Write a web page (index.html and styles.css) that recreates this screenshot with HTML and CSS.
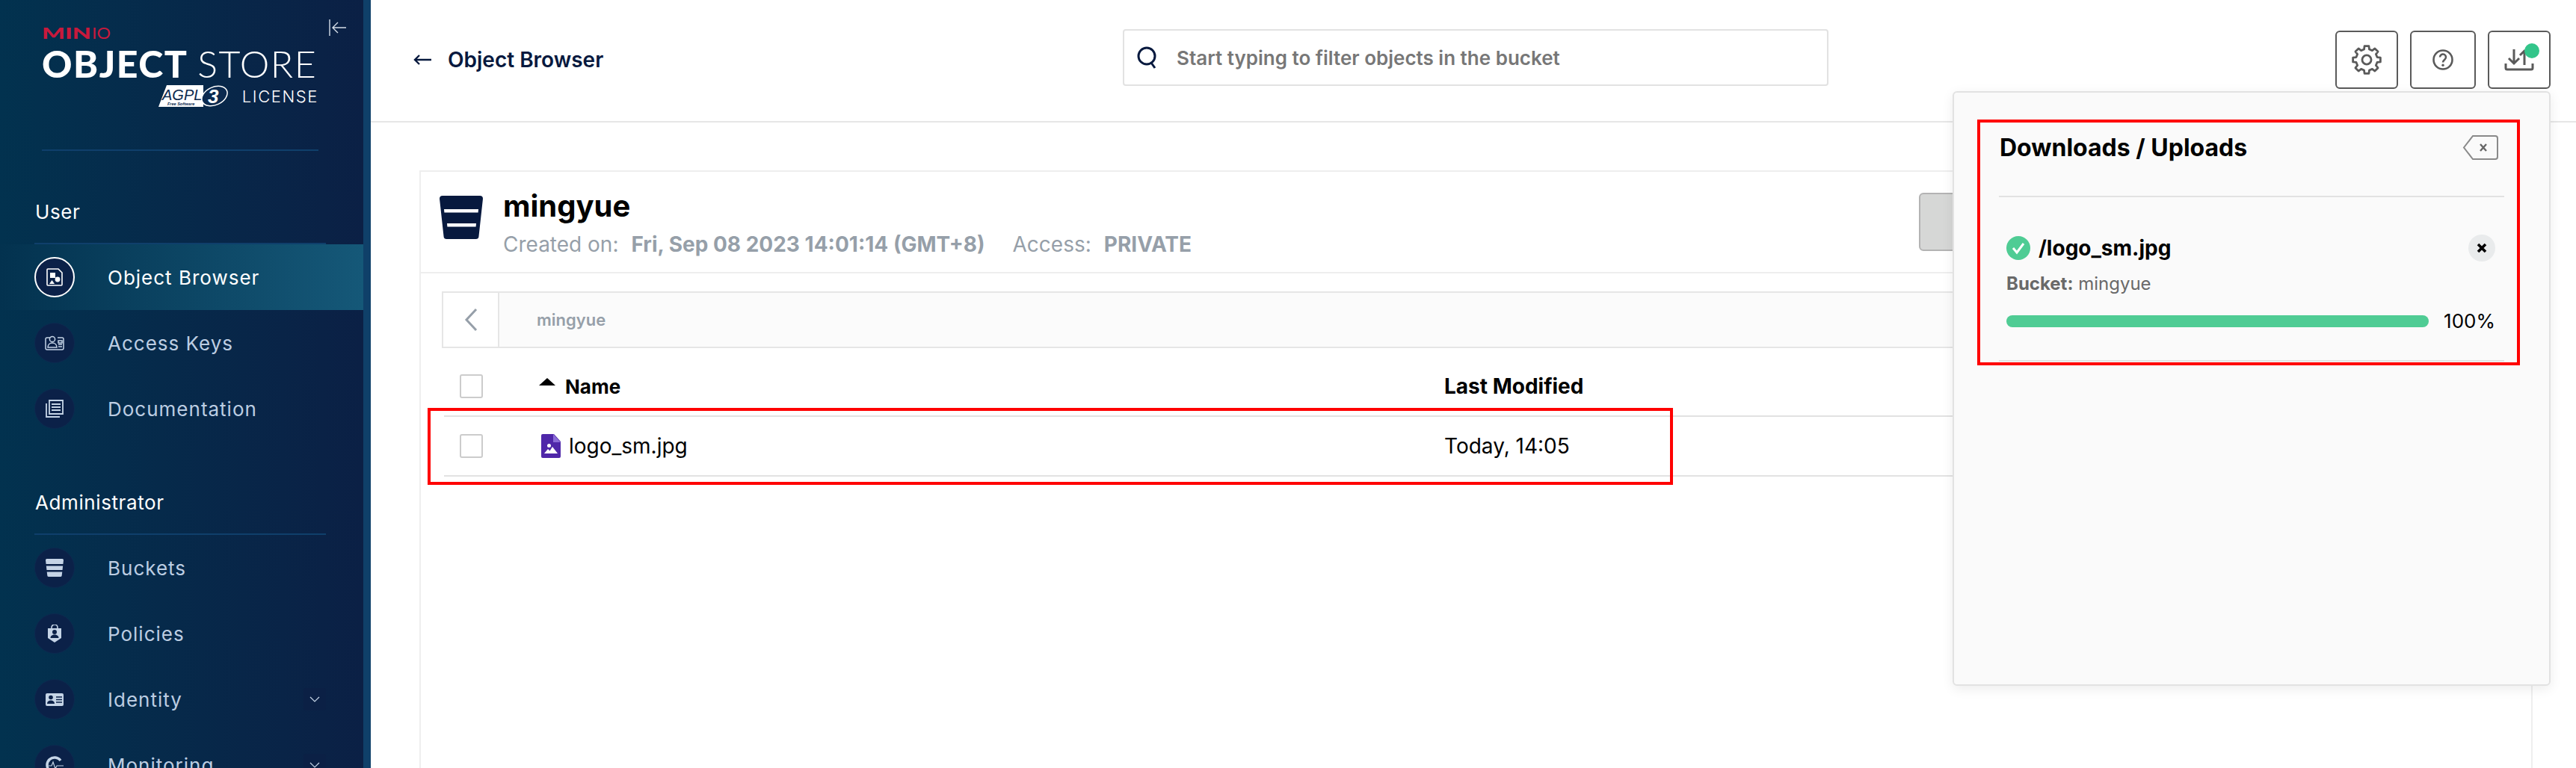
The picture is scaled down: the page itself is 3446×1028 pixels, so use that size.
FILE: index.html
```html
<!DOCTYPE html>
<html lang="en">
<head>
  <meta charset="UTF-8" />
  <title>MinIO Object Store - Object Browser</title>
  <link rel="stylesheet" href="styles.css">
</head>
<body>

<aside class="sidebar">
  <div class="brand">
    <div class="brand-minio"><b>MIN</b><span>IO</span></div>
    <div class="brand-name"><b>OBJECT</b> <span>STORE</span></div>
    <div class="brand-license">
      <svg class="agpl" width="94" height="31" viewBox="0 0 94 31">
        <polygon points="0,30 11,1 60,1 60,30" fill="#fff"/>
        <text x="5" y="21" class="agpl-word">AGPL</text>
        <text x="12" y="28" class="agpl-free">Free Software</text>
        <ellipse cx="75" cy="15.500" rx="18" ry="12" transform="rotate(-25 75 15.500)" fill="#0b2a4f" stroke="#fff" stroke-width="1.500"/>
        <text x="66" y="25" class="agpl-three">3</text>
      </svg>
      <span>LICENSE</span>
    </div>
    <svg class="collapse" width="24" height="24" viewBox="0 0 24 24" fill="none" stroke="#d5dde8" stroke-width="1.4">
      <path d="M1 1v22M23 12H5M12 5l-7 7 7 7"/>
    </svg>
  </div>

  <div class="nav-title">User</div>
  <a class="nav-item active">
    <span class="nav-icon">
      <svg width="24" height="26" viewBox="0 0 24 26" fill="none" stroke="#fff" stroke-width="1.6">
        <path d="M3 2h14l5 5v16a1 1 0 0 1-1 1H3a1 1 0 0 1-1-1V3a1 1 0 0 1 1-1z"/>
        <g fill="#fff" stroke="none"><rect x="6" y="7" width="7" height="7"/><circle cx="16" cy="16" r="3.4"/><path d="M5 22l3.5-5 3.5 5z"/></g>
      </svg>
    </span>
    <span>Object Browser</span>
  </a>
  <a class="nav-item">
    <span class="nav-icon">
      <svg width="26" height="20" viewBox="0 0 26 20" fill="none" stroke="#c5d4e6" stroke-width="1.5">
        <path d="M7 3H3a2 2 0 0 0-2 2v12a2 2 0 0 0 2 2h20a2 2 0 0 0 2-2V5a2 2 0 0 0-2-2h-6"/>
        <circle cx="10" cy="5" r="3.6"/>
        <path d="M4 16c0-4 3-6 6-6s6 2 6 6z"/>
        <path d="M18 7h5v3h-5zM18 12h5M18 15h5"/>
      </svg>
    </span>
    <span>Access Keys</span>
  </a>
  <a class="nav-item">
    <span class="nav-icon">
      <svg width="24" height="24" viewBox="0 0 24 24" fill="none" stroke="#c5d4e6" stroke-width="1.8">
        <path d="M5 1h18v18H5z" fill="none"/>
        <path d="M1 5v18h18" />
        <path d="M8 6h12M8 10h12M8 14h12"/>
      </svg>
    </span>
    <span>Documentation</span>
  </a>

  <div class="nav-title">Administrator</div>
  <a class="nav-item">
    <span class="nav-icon">
      <svg width="24" height="24" viewBox="0 0 58 58">
        <path d="M0 4a4 4 0 0 1 4-4h50a4 4 0 0 1 4 4l-5.500 50a4 4 0 0 1-4 4H9.500a4 4 0 0 1-4-4z" fill="#c5d4e6"/>
        <path d="M0 17h58v6H0zM0 36h58v6H0z" fill="#0b2148"/>
      </svg>
    </span>
    <span>Buckets</span>
  </a>
  <a class="nav-item">
    <span class="nav-icon">
      <svg width="20" height="24" viewBox="0 0 20 24">
        <path d="M6 5V4a4 4 0 0 1 8 0v1" fill="none" stroke="#c5d4e6" stroke-width="1.6"/>
        <path d="M1 5h18v13l-9 6-9-6z" fill="#c5d4e6"/>
        <circle cx="10" cy="10" r="3" fill="#0b2148"/>
        <path d="M4.500 18c0-3 2.500-4.500 5.500-4.500s5.500 1.500 5.500 4.500z" fill="#0b2148"/>
      </svg>
    </span>
    <span>Policies</span>
  </a>
  <a class="nav-item">
    <span class="nav-icon">
      <svg width="24" height="17" viewBox="0 0 24 17">
        <rect width="24" height="17" rx="2" fill="#c5d4e6"/>
        <circle cx="7" cy="5.500" r="2.800" fill="#0b2148"/>
        <path d="M2 14c0-3 2.200-4.500 5-4.500s5 1.500 5 4.500z" fill="#0b2148"/>
        <path d="M14 5h8M14 8.500h8M14 12h8" stroke="#0b2148" stroke-width="1.500"/>
      </svg>
    </span>
    <span>Identity</span>
    <span class="nav-toggle"><svg width="14" height="8" viewBox="0 0 14 8" fill="none" stroke="#c5d4e6" stroke-width="1.2"><path d="M1 1l6 6 6-6"/></svg></span>
  </a>
  <a class="nav-item">
    <span class="nav-icon">
      <svg width="24" height="24" viewBox="0 0 24 24" fill="none" stroke="#c5d4e6">
        <path d="M20 6a10 10 0 1 0 0 12" stroke-width="3.500"/>
        <path d="M4 13h4l2-5 3 9 2-4h9" stroke-width="1.200"/>
      </svg>
    </span>
    <span>Monitoring</span>
    <span class="nav-toggle"><svg width="14" height="8" viewBox="0 0 14 8" fill="none" stroke="#c5d4e6" stroke-width="1.2"><path d="M1 1l6 6 6-6"/></svg></span>
  </a>
</aside>

<main class="main">
  <header class="topbar">
    <a class="back-link">
      <svg width="24" height="16" viewBox="0 0 24 16" fill="none" stroke="#07193e" stroke-width="2.400"><path d="M24 8H2M8 2L2 8l6 6"/></svg>
      <span>Object Browser</span>
    </a>
    <div class="search">
      <svg width="28" height="30" viewBox="0 0 28 30" fill="none" stroke="#07193e" stroke-width="3"><circle cx="13" cy="13" r="11"/><path d="M19 22l5 7"/></svg>
      <span>Start typing to filter objects in the bucket</span>
    </div>
    <div class="top-actions">
      <button class="top-btn gear">
        <svg width="40" height="40" viewBox="-21.500 -21.500 43 43" fill="none" stroke="#5a5a5a" stroke-width="3" stroke-linejoin="round">
          <polygon points="-3.750,-15.040 -3.130,-19.750 3.130,-19.750 3.750,-15.040 7.980,-13.290 11.750,-16.180 16.180,-11.750 13.290,-7.980 15.040,-3.750 19.750,-3.130 19.750,3.130 15.040,3.750 13.290,7.980 16.180,11.750 11.750,16.180 7.980,13.290 3.750,15.040 3.130,19.750 -3.130,19.750 -3.750,15.040 -7.980,13.290 -11.750,16.180 -16.180,11.750 -13.290,7.980 -15.040,3.750 -19.750,3.130 -19.750,-3.130 -15.040,-3.750 -13.290,-7.980 -16.180,-11.750 -11.750,-16.180 -7.980,-13.290"/>
          <circle r="6.500"/>
        </svg>
      </button>
      <button class="top-btn help">
        <svg width="28" height="28" viewBox="-14 -14 28 28" fill="none" stroke="#5a5a5a" stroke-width="2.600">
          <circle r="12.500"/>
          <path d="M-4-3.500a4 4 0 1 1 6.500 3.100C1 .8 0 1.500 0 3.500"/>
          <circle cy="7.200" r="1.700" fill="#5a5a5a" stroke="none"/>
        </svg>
      </button>
      <button class="top-btn transfers">
        <svg width="40" height="30" viewBox="0 0 40 30" fill="none" stroke="#5a5a5a" stroke-width="3">
          <path d="M2 20v6a2 2 0 0 0 2 2h32a2 2 0 0 0 2-2v-6"/>
          <path d="M13 1v19M6 13l7 7 7-7"/>
          <path d="M27 22V3M21 9l6-6 6 6"/>
        </svg>
        <span class="badge"></span>
      </button>
    </div>
  </header>

  <div class="content">
    <section class="bucket-card">
      <div class="bucket-head">
        <svg class="bucket-icon" width="58" height="58" viewBox="0 0 58 58">
          <path d="M0 4a4 4 0 0 1 4-4h50a4 4 0 0 1 4 4l-5.500 50a4 4 0 0 1-4 4H9.500a4 4 0 0 1-4-4z" fill="#07193e"/>
          <path d="M6 18h46l-.4 4.500H6.400zM10 37h39l-.4 4.500H10.400z" fill="#fff"/>
        </svg>
        <div class="bucket-info">
          <h1>mingyue</h1>
          <div class="bucket-meta">
            <span>Created on:<b>Fri, Sep 08 2023 14:01:14 (GMT+8)</b></span>
            <span>Access:<b>PRIVATE</b></span>
          </div>
        </div>
        <div class="bucket-actions"><button class="btn-disabled"></button></div>
      </div>

      <div class="browser">
        <div class="breadcrumb">
          <button class="crumb-back">
            <svg width="18" height="32" viewBox="0 0 18 32" fill="none" stroke="#969fa9" stroke-width="3"><path d="M16 2L3 16l13 14"/></svg>
          </button>
          <span class="crumb-path">mingyue</span>
        </div>

        <div class="table-row table-head">
          <span class="checkbox"></span>
          <span class="name-cell">
            <svg width="22" height="10" viewBox="0 0 22 10"><path d="M11 0l11 10H0z" fill="#000"/></svg>
            Name
          </span>
          <span>Last Modified</span>
        </div>
        <div class="table-row">
          <span class="checkbox"></span>
          <span class="name-cell file">
            <svg width="26" height="32" viewBox="0 0 26 32">
              <path d="M2 0h15l9 10v20a2 2 0 0 1-2 2H2a2 2 0 0 1-2-2V2a2 2 0 0 1 2-2z" fill="#4f27a9"/>
              <path d="M16 0l10 11H16z" fill="#8a6cd6"/>
              <circle cx="10.500" cy="15.500" r="2.500" fill="#fff"/>
              <path d="M4 26l5-6 2.500 2.500L15 17l7 9z" fill="#fff"/>
            </svg>
            logo_sm.jpg
          </span>
          <span>Today, 14:05</span>
        </div>
      </div>
    </section>
  </div>
</main>

<div class="transfer-panel">
  <div class="panel-head">
    <h2>Downloads / Uploads</h2>
    <svg width="48" height="33" viewBox="0 0 48 33" fill="none" stroke="#8a8a8a" stroke-width="2">
      <path d="M14 1h30a3 3 0 0 1 3 3v25a3 3 0 0 1-3 3H14L2 16.500z"/>
      <path d="M24 12l8 9M32 12l-8 9" stroke="#666" stroke-width="2.400"/>
    </svg>
  </div>
  <div class="transfer-item">
    <div class="transfer-title">
      <svg width="32" height="32" viewBox="0 0 32 32"><circle cx="16" cy="16" r="16" fill="#4fcc94"/><path d="M9 16l5 6 9-12" fill="none" stroke="#fff" stroke-width="3"/></svg>
      <b>/logo_sm.jpg</b>
      <span class="transfer-close">
        <svg width="14" height="14" viewBox="0 0 14 14" fill="none" stroke="#000" stroke-width="3.600"><path d="M2 2l10 10M12 2L2 12"/></svg>
      </span>
    </div>
    <div class="transfer-bucket"><b>Bucket:</b> mingyue</div>
    <div class="transfer-progress">
      <div class="bar"><div class="bar-fill" style="width: 100%"></div></div>
      <span>100%</span>
    </div>
  </div>
</div>

<div class="mark mark-row"></div>
<div class="mark mark-panel"></div>

</body>
</html>
```

FILE: styles.css
```css
* {
  box-sizing: border-box;
}

html, body {
  height: 100%;
}

body {
  margin: 0;
  display: flex;
  height: 1028px;
  overflow: hidden;
  position: relative;
  font-family: Inter, "Liberation Sans", sans-serif;
  font-size: 26px;
  color: #000;
  background: #fff;
}

button {
  font: inherit;
  padding: 0;
}

/* sidebar */
.sidebar {
  width: 496px;
  flex: none;
  height: 1028px;
  overflow: hidden;
  background: linear-gradient(90deg, #02324f 0%, #0b2045 100%);
  background-size: 486px 100%;
  background-repeat: no-repeat;
  background-color: #0f4069;
}

.brand {
  position: relative;
  height: 202px;
  width: 370px;
  margin-left: 56px;
  padding-top: 33px;
  border-bottom: 2px solid #0f3f6b;
}
.brand-minio {
  display: flex;
  align-items: center;
  height: 22px;
  line-height: 22px;
  font-family: Lato, sans-serif;
  font-size: 21px;
  color: #c8193c;
}
.brand-minio b {
  display: inline-block;
  width: 67px;
  font-weight: 900;
  transform: scaleX(1.55);
  transform-origin: left;
}
.brand-minio span {
  display: inline-block;
  font-weight: 400;
  transform: scaleX(1.1);
  transform-origin: left;
}
.brand-name {
  margin-top: 3px;
  height: 54px;
  line-height: 54px;
  font-family: Lato, sans-serif;
  font-size: 50px;
  color: #fff;
  white-space: nowrap;
}
.brand-name b {
  font-weight: 900;
  letter-spacing: 1.5px;
}
.brand-name span {
  font-weight: 300;
  letter-spacing: 1.5px;
}
.brand-license {
  display: flex;
  justify-content: flex-end;
  align-items: center;
  gap: 18px;
  margin-top: 1px;
  font-weight: 300;
  font-size: 22px;
  letter-spacing: 1.6px;
  color: #fff;
}
.agpl-word {
  font-family: "Liberation Sans", sans-serif;
  font-style: italic;
  font-size: 20px;
  fill: #0b2a4f;
  letter-spacing: 0;
}
.agpl-free {
  font-family: "Liberation Sans", sans-serif;
  font-style: italic;
  font-weight: 700;
  font-size: 5.500px;
  fill: #0b2a4f;
  letter-spacing: 0;
}
.agpl-three {
  font-family: "Liberation Sans", sans-serif;
  font-style: italic;
  font-weight: 700;
  font-size: 26px;
  fill: #fff;
  letter-spacing: 0;
}
.collapse {
  position: absolute;
  left: 384px;
  top: 25px;
}

.nav-title {
  display: flex;
  align-items: flex-end;
  height: 125px;
  width: 390px;
  margin-left: 46px;
  padding: 0 0 24px 1px;
  border-bottom: 2px solid #0f3f6b;
  font-size: 26px;
  line-height: 34px;
  letter-spacing: .6px;
  color: #fff;
}

.nav-item {
  display: flex;
  align-items: center;
  width: 486px;
  height: 88px;
  padding: 0 50px 0 46px;
  gap: 44px;
  font-size: 26px;
  letter-spacing: 1px;
  color: #bccde2;
}
.nav-item.active {
  color: #fff;
  background: linear-gradient(90deg, #03324f 0%, #155878 100%);
}
.nav-icon {
  display: flex;
  align-items: center;
  justify-content: center;
  flex: none;
  width: 54px;
  height: 54px;
  border-radius: 50%;
  background: #0b2148;
  border: 1px solid #0c2a50;
}
.active .nav-icon {
  border: 2px solid #fff;
}
.nav-toggle {
  display: flex;
  align-items: center;
  justify-content: center;
  width: 30px;
  height: 30px;
  margin-left: auto;
  border-radius: 3px;
  background: #0b2045;
}

/* top bar */
.main {
  flex: 1;
  display: flex;
  flex-direction: column;
  min-width: 0;
}
.topbar {
  display: grid;
  grid-template-columns: 1006px 944px 1fr;
  align-items: center;
  height: 164px;
  flex: none;
  border-bottom: 2px solid #e6e6e6;
  padding-bottom: 2px;
}
.back-link {
  display: flex;
  align-items: center;
  gap: 22px;
  padding-left: 57px;
  font-weight: 600;
  font-size: 28px;
  color: #07193e;
}
.search {
  display: flex;
  align-items: center;
  gap: 25px;
  height: 76px;
  margin-top: -6px;
  padding-left: 17px;
  border: 2px solid #e2e2e2;
  border-radius: 4px;
  font-weight: 600;
  font-size: 26px;
  color: #777;
}
.top-actions {
  display: flex;
  justify-content: flex-end;
  gap: 16px;
  padding-right: 34px;
}
.top-btn {
  position: relative;
  display: flex;
  align-items: center;
  justify-content: center;
  height: 78px;
  background: #fff;
  border: 2px solid #5a5a5a;
  border-radius: 6px;
}
.gear { width: 84px; }
.help { width: 88px; }
.transfers { width: 84px; }
.badge {
  position: absolute;
  right: 13px;
  top: 15px;
  width: 20px;
  height: 20px;
  border-radius: 50%;
  background: #33c58a;
}

/* bucket card */
.content {
  flex: 1;
  padding: 64px 58px 0 65px;
  min-height: 0;
  overflow: hidden;
}
.bucket-card {
  height: 900px;
  border: 2px solid #eee;
}
.bucket-head {
  display: flex;
  height: 136px;
  padding-left: 25px;
  border-bottom: 2px solid #eee;
}
.bucket-icon {
  flex: none;
  margin-top: 32px;
}
.bucket-info {
  padding: 22px 0 0 27px;
}
.bucket-info h1 {
  margin: 0;
  font-size: 40px;
  line-height: 48px;
  font-weight: 700;
}
.bucket-meta {
  display: flex;
  gap: 37px;
  margin-top: 10px;
  line-height: 34px;
  font-size: 28px;
  color: #969fa9;
}
.bucket-meta b {
  margin-left: 17px;
  font-weight: 700;
}
.bucket-actions {
  margin-left: auto;
  width: 819px;
  flex: none;
  padding-top: 28px;
}
.btn-disabled {
  display: block;
  width: 200px;
  height: 78px;
  background: #d6d7d6;
  border: 2px solid #b3b3b3;
  border-radius: 6px;
}

.browser {
  padding: 24px 28px 0;
}
.breadcrumb {
  display: flex;
  height: 76px;
  background: #fbfbfb;
  border: 2px solid #e6e6e6;
  border-right: 0;
}
.crumb-back {
  display: flex;
  align-items: center;
  justify-content: center;
  width: 75px;
  flex: none;
  background: #fff;
  border: 0;
  border-right: 2px solid #e6e6e6;
}
.crumb-path {
  align-self: center;
  margin-left: 50px;
  font-size: 22px;
  font-weight: 600;
  color: #969fa9;
}

.table-row {
  display: grid;
  grid-template-columns: 127px 1190px 1fr;
  align-items: center;
  height: 80px;
  margin-left: 3px;
  padding-left: 21px;
  border-bottom: 2px solid #e2e2e2;
  font-size: 28px;
}
.table-head {
  height: 92px;
  padding-top: 12px;
  font-weight: 700;
}
.checkbox {
  display: block;
  width: 31px;
  height: 32px;
  background: #fff;
  border: 2px solid #ccc;
  border-radius: 3px;
}
.name-cell {
  display: flex;
  align-items: center;
  gap: 13px;
  margin-left: -21px;
  font-size: 26px;
}
.table-head .name-cell svg {
  margin-top: -12px;
}
.file {
  margin-left: -18px;
  gap: 11px;
  font-size: 28px;
}

/* downloads panel, lies over the card */
.transfer-panel {
  position: absolute;
  left: 2612px;
  top: 122px;
  width: 800px;
  height: 796px;
  padding: 0 60px;
  background: #fafafa;
  border: 2px solid #e2e2e2;
  border-radius: 6px;
  box-shadow: 0 4px 16px rgba(0, 0, 0, .08);
}
.panel-head {
  display: flex;
  justify-content: space-between;
  align-items: center;
  height: 140px;
  padding: 8px 8px 0 1px;
  border-bottom: 2px solid #e2e2e2;
}
.panel-head h2 {
  margin: 0;
  font-size: 32px;
  font-weight: 700;
}
.transfer-item {
  height: 220px;
  padding: 50px 12px 0 10px;
  border-bottom: 2px solid #e2e2e2;
}
.transfer-title {
  display: flex;
  align-items: center;
  gap: 11px;
  height: 36px;
  font-size: 28px;
}
.transfer-title b {
  font-weight: 700;
}
.transfer-close {
  display: flex;
  align-items: center;
  justify-content: center;
  width: 36px;
  height: 36px;
  margin-left: auto;
  border-radius: 50%;
  background: #e9ebec;
}
.transfer-bucket {
  margin-top: 15px;
  line-height: 30px;
  font-size: 24px;
  color: #696969;
}
.transfer-bucket b {
  font-weight: 700;
}
.transfer-progress {
  display: flex;
  align-items: center;
  justify-content: space-between;
  margin-top: 20px;
  line-height: 30px;
  font-size: 26px;
}
.bar {
  width: 565px;
  height: 16px;
  border-radius: 8px;
  overflow: hidden;
  background: #e2e2e2;
}
.bar-fill {
  height: 100%;
  background: #4fcc94;
}

/* red boxes drawn on the screenshot */
.mark {
  position: absolute;
  border: 4px solid #f00;
}
.mark-row {
  left: 572px;
  top: 546px;
  width: 1666px;
  height: 103px;
}
.mark-panel {
  left: 2645px;
  top: 160px;
  width: 726px;
  height: 329px;
}
```
